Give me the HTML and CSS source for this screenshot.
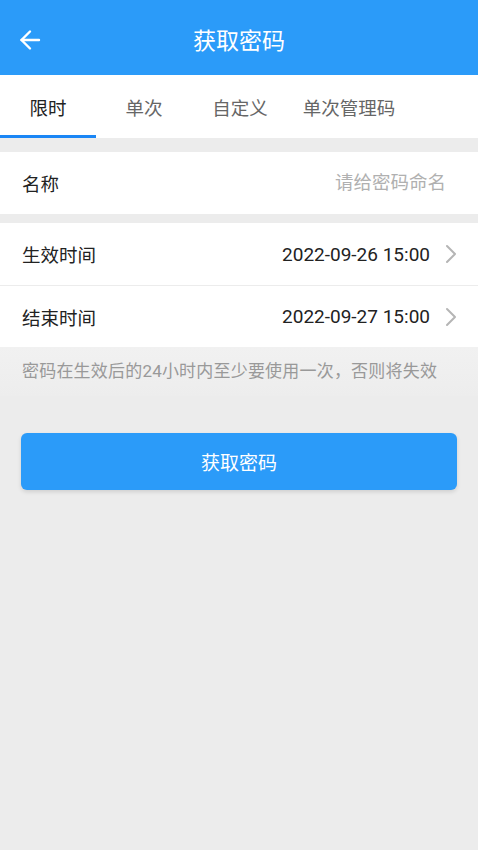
FILE: index.html
```html
<!DOCTYPE html>
<html lang="zh-CN">
<head>
    <meta charset="UTF-8">
    <meta name="viewport" content="width=device-width, initial-scale=1.0">
    <title>获取密码</title>
    <link rel="stylesheet" href="styles.css">
</head>
<body>
    <div class="header">
        <span class="back">
            <svg width="22" height="22" viewBox="0 0 22 22" fill="none" stroke="#fff" stroke-width="2.4" stroke-linecap="round" stroke-linejoin="round">
                <path d="M20 11H2.5"/>
                <path d="M11 2.5L2.5 11L11 19.5"/>
            </svg>
        </span>
        <h1>获取密码</h1>
    </div>

    <div class="tabs">
        <div class="tab active">限时</div>
        <div class="tab">单次</div>
        <div class="tab">自定义</div>
        <div class="tab">单次管理码</div>
    </div>

    <div class="group name-group">
        <div class="row">
            <span class="label">名称</span>
            <input type="text" class="name-input" placeholder="请给密码命名">
        </div>
    </div>

    <div class="group">
        <div class="row">
            <span class="label">生效时间</span>
            <span class="value">2022-09-26 15:00</span>
            <span class="chevron">
                <svg width="12" height="20" viewBox="0 0 12 20" fill="none" stroke="#b5b5b5" stroke-width="2" stroke-linecap="round" stroke-linejoin="round">
                    <path d="M2 2L10 10L2 18"/>
                </svg>
            </span>
        </div>
        <div class="row">
            <span class="label">结束时间</span>
            <span class="value">2022-09-27 15:00</span>
            <span class="chevron">
                <svg width="12" height="20" viewBox="0 0 12 20" fill="none" stroke="#b5b5b5" stroke-width="2" stroke-linecap="round" stroke-linejoin="round">
                    <path d="M2 2L10 10L2 18"/>
                </svg>
            </span>
        </div>
    </div>

    <p class="note">密码在生效后的24小时内至少要使用一次，否则将失效</p>

    <div class="actions">
        <button class="submit">获取密码</button>
    </div>
</body>
</html>
```

FILE: styles.css
```css
body {
    font-family: Roboto, "Noto Sans CJK SC", sans-serif;
    background-color: #ececec;
    margin: 0;
    min-height: 850px;
}

.header {
    height: 75px;
    background-color: #2b9bf9;
    display: flex;
    align-items: center;
    justify-content: center;
    position: relative;
}

.back {
    position: absolute;
    left: 19px;
    top: 29px;
    display: flex;
}

.header h1 {
    margin: 0;
    color: #ffffff;
    font-size: 23px;
    font-weight: normal;
    padding-top: 2px;
}

.tabs {
    display: flex;
    height: 63px;
    background: #ffffff;
    margin-bottom: 14px;
}

.tab {
    flex: 0 0 auto;
    display: flex;
    align-items: center;
    justify-content: center;
    font-size: 18.5px;
    color: #666666;
    box-sizing: border-box;
    border-bottom: 3px solid transparent;
    padding-top: 3px;
}

.tab:nth-child(1) { width: 96px; }
.tab:nth-child(2) { width: 96px; }
.tab:nth-child(3) { width: 96px; }
.tab:nth-child(4) { width: 122px; }

.tab.active {
    color: #222222;
    border-bottom-color: #1a86f5;
}

.group {
    background: #ffffff;
}

.name-group {
    margin-bottom: 9px;
}

.row {
    height: 62px;
    display: flex;
    align-items: center;
    padding: 0 21px 0 22px;
    box-sizing: border-box;
}

.row + .row {
    border-top: 1px solid #ececec;
}

.label {
    font-size: 18.5px;
    color: #222222;
    flex: 1;
}

.name-input {
    border: none;
    outline: none;
    text-align: right;
    font-family: inherit;
    font-size: 18.5px;
    width: 220px;
    padding: 0 11px 0 0;
    background: transparent;
}

.name-input::placeholder {
    color: #b0b0b0;
}

.value {
    font-size: 19px;
    color: #222222;
}

.chevron {
    display: flex;
    margin-left: 15px;
}

.note {
    margin: 0;
    padding: 10px 22px 14px;
    font-size: 17px;
    letter-spacing: 0.2px;
    color: #999999;
    background: linear-gradient(#f1f1f1, #ededed);
}

.actions {
    padding: 37px 21px 0;
}

.submit {
    width: 100%;
    height: 57px;
    border: none;
    border-radius: 6px;
    background-color: #2b9bf9;
    color: #ffffff;
    font-family: inherit;
    font-size: 19px;
    box-shadow: 0 2px 4px rgba(0, 0, 0, 0.12);
    cursor: pointer;
}
```
